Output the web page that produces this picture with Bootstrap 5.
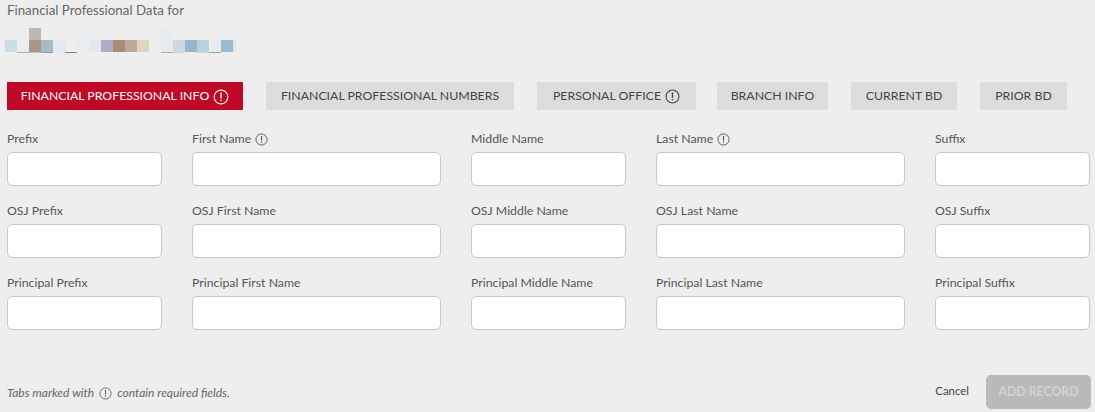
<!DOCTYPE html>
<html lang="en">
<head>
    <meta charset="UTF-8">
    <meta name="viewport" content="width=device-width, initial-scale=1.0">
    <title>Financial Professional Data</title>
    <link href="https://cdn.jsdelivr.net/npm/bootstrap@5.3.2/dist/css/bootstrap.min.css" rel="stylesheet">
    <style>
        body {
            background-color: #eeeeee;
            font-family: "Lato", sans-serif;
            font-size: 12px;
            color: #444;
            height: 412px;
            overflow: hidden;
        }
        .page-wrap {
            padding: 0 5px 0 7px;
        }
        .data-title {
            color: #666;
            font-size: 13.3px;
            line-height: 18px;
            padding-top: 1px;
        }
        .blur-name {
            display: block;
            margin: 9px 0 0 -5px;
        }
        .tab-row {
            margin-top: 28px;
            height: 28px;
        }
        .tab-item {
            background-color: #dcdcdc;
            color: #444;
            font-size: 12.3px;
            height: 28px;
            border: 0;
            border-radius: 0;
            padding: 1px 0 0;
            white-space: nowrap;
            justify-content: center;
        }
        .tab-item.active-tab {
            background-color: #c10825;
            color: #fff;
        }
        .w-a { width: 236px; margin-right: 23px; }
        .w-b { width: 248px; margin-right: 23px; }
        .w-c { width: 159px; margin-right: 21px; }
        .w-d { width: 111px; margin-right: 23px; }
        .w-e { width: 106px; margin-right: 23px; }
        .w-f { width: 87px; }
        .field-grid {
            display: grid;
            grid-template-columns: 155fr 249fr 155fr 249fr 155fr;
            column-gap: 30px;
            row-gap: 16px;
            margin-top: 20px;
        }
        .field-label {
            display: flex;
            align-items: center;
            gap: 4px;
            height: 18px;
            margin-bottom: 4px;
            font-size: 12.3px;
            color: #555;
        }
        .field-input {
            height: 34px;
            border: 1px solid #c8c8c8;
            border-radius: 5px;
            padding: 4px 8px;
            font-size: 12.3px;
        }
        .foot-row {
            margin-top: 45px;
            height: 34px;
            margin-right: -1px;
        }
        .req-note {
            font-style: italic;
            font-size: 12px;
            color: #666;
            margin-top: 2px;
        }
        .req-note .info-ico {
            margin: 0 1px;
        }
        .cancel-link {
            color: #444;
            font-size: 11.4px;
            text-decoration: none;
            margin-right: 17px;
            margin-top: -3px;
        }
        .add-btn, .add-btn:disabled {
            width: 105px;
            height: 34px;
            padding: 0;
            border: 0;
            border-radius: 5px;
            background-color: #b9b9b9;
            color: #d2d2d2;
            font-size: 12.3px;
            font-weight: 700;
            opacity: 1;
        }
        .info-ico {
            flex: none;
        }
    </style>
</head>
<body>
    <!-- shared icon -->
    <svg width="0" height="0" class="position-absolute">
        <symbol id="ico-req" viewBox="0 0 14 14">
            <circle cx="7" cy="7" r="6" fill="none" stroke="currentColor" stroke-width="1"/>
            <rect x="6.4" y="3.2" width="1.2" height="5" fill="currentColor"/>
            <rect x="6.4" y="9.3" width="1.2" height="1.3" fill="currentColor"/>
        </symbol>
    </svg>

    <div class="page-wrap">
        <div class="data-title">Financial Professional Data for</div>

        <!-- name is pixelated in the picture -->
        <svg class="blur-name" width="236" height="26" viewBox="0 0 236 26">
            <rect x="27" y="0" width="12" height="12" fill="#c2b9ae"/>
            <rect x="75" y="0" width="12" height="12" fill="#ebedef"/>
            <rect x="159" y="0" width="12" height="12" fill="#e9ecee"/>
            <rect x="3" y="12" width="12" height="12" fill="#c9dde5"/>
            <rect x="15" y="12" width="12" height="12" fill="#ebeced"/>
            <rect x="27" y="12" width="12" height="12" fill="#a89786"/>
            <rect x="39" y="12" width="12" height="12" fill="#a7bac8"/>
            <rect x="51" y="12" width="12" height="12" fill="#e5e9ee"/>
            <rect x="75" y="12" width="12" height="12" fill="#e8edf0"/>
            <rect x="87" y="12" width="12" height="12" fill="#e3e7ef"/>
            <rect x="99" y="12" width="12" height="12" fill="#aeabc8"/>
            <rect x="111" y="12" width="12" height="12" fill="#a78e73"/>
            <rect x="123" y="12" width="12" height="12" fill="#bfa79c"/>
            <rect x="135" y="12" width="12" height="12" fill="#dfd3c3"/>
            <rect x="159" y="12" width="12" height="12" fill="#e6ebec"/>
            <rect x="171" y="12" width="12" height="12" fill="#c9dae4"/>
            <rect x="183" y="12" width="12" height="12" fill="#97b6cb"/>
            <rect x="195" y="12" width="12" height="12" fill="#bbd1df"/>
            <rect x="207" y="12" width="12" height="12" fill="#e7ecef"/>
            <rect x="219" y="12" width="12" height="12" fill="#9abad2"/>
            <rect x="231" y="12" width="3" height="12" fill="#e8e4d8"/>
            <rect x="15" y="24" width="12" height="1" fill="#bfa99a"/>
            <rect x="27" y="24" width="12" height="1" fill="#c8c0b8"/>
            <rect x="39" y="24" width="12" height="1" fill="#9a9aa8"/>
            <rect x="63" y="24" width="12" height="1" fill="#808080"/>
            <rect x="159" y="24" width="12" height="1" fill="#b8a99a"/>
            <rect x="171" y="24" width="12" height="1" fill="#dccfc0"/>
            <rect x="195" y="24" width="12" height="1" fill="#d8cdbf"/>
            <rect x="207" y="24" width="12" height="1" fill="#ae9f92"/>
        </svg>

        <div class="tab-row d-flex">
            <button type="button" class="tab-item active-tab w-a d-flex align-items-center gap-1">FINANCIAL PROFESSIONAL INFO <svg class="info-ico" width="16" height="16"><use href="#ico-req"/></svg></button>
            <button type="button" class="tab-item w-b d-flex align-items-center">FINANCIAL PROFESSIONAL NUMBERS</button>
            <button type="button" class="tab-item w-c d-flex align-items-center gap-1">PERSONAL OFFICE <svg class="info-ico" width="15" height="15"><use href="#ico-req"/></svg></button>
            <button type="button" class="tab-item w-d d-flex align-items-center">BRANCH INFO</button>
            <button type="button" class="tab-item w-e d-flex align-items-center">CURRENT BD</button>
            <button type="button" class="tab-item w-f d-flex align-items-center">PRIOR BD</button>
        </div>

        <form class="field-grid">
            <div><label class="field-label">Prefix</label><input class="form-control field-input" type="text"></div>
            <div><label class="field-label">First Name <svg class="info-ico" width="13" height="13"><use href="#ico-req"/></svg></label><input class="form-control field-input" type="text"></div>
            <div><label class="field-label">Middle Name</label><input class="form-control field-input" type="text"></div>
            <div><label class="field-label">Last Name <svg class="info-ico" width="13" height="13"><use href="#ico-req"/></svg></label><input class="form-control field-input" type="text"></div>
            <div><label class="field-label">Suffix</label><input class="form-control field-input" type="text"></div>

            <div><label class="field-label">OSJ Prefix</label><input class="form-control field-input" type="text"></div>
            <div><label class="field-label">OSJ First Name</label><input class="form-control field-input" type="text"></div>
            <div><label class="field-label">OSJ Middle Name</label><input class="form-control field-input" type="text"></div>
            <div><label class="field-label">OSJ Last Name</label><input class="form-control field-input" type="text"></div>
            <div><label class="field-label">OSJ Suffix</label><input class="form-control field-input" type="text"></div>

            <div><label class="field-label">Principal Prefix</label><input class="form-control field-input" type="text"></div>
            <div><label class="field-label">Principal First Name</label><input class="form-control field-input" type="text"></div>
            <div><label class="field-label">Principal Middle Name</label><input class="form-control field-input" type="text"></div>
            <div><label class="field-label">Principal Last Name</label><input class="form-control field-input" type="text"></div>
            <div><label class="field-label">Principal Suffix</label><input class="form-control field-input" type="text"></div>
        </form>

        <div class="foot-row d-flex align-items-center justify-content-between">
            <div class="req-note d-flex align-items-center gap-1">Tabs marked with <svg class="info-ico" width="13" height="13"><use href="#ico-req"/></svg> contain required fields.</div>
            <div class="d-flex align-items-center">
                <a class="cancel-link" href="#">Cancel</a>
                <button type="button" class="btn add-btn" disabled>ADD RECORD</button>
            </div>
        </div>
    </div>
</body>
</html>
